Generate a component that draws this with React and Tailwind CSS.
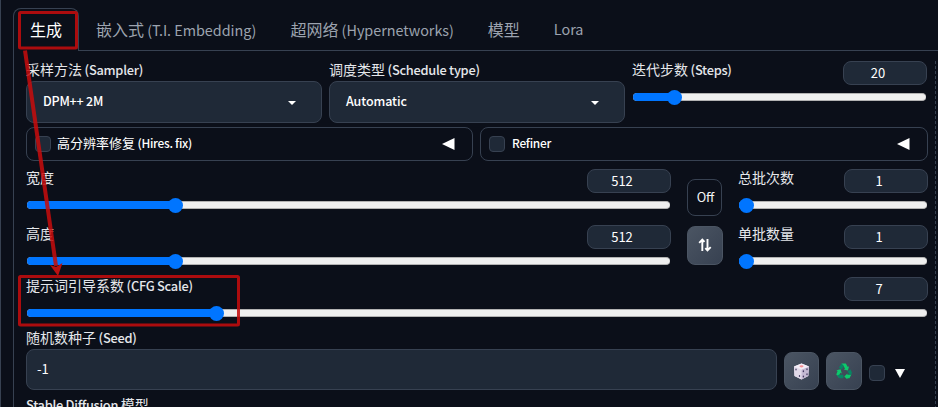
import React from "react";

// Latin glyphs are set a step smaller than the Chinese ones beside them.
function Label({ zh, en, className = "" }) {
  return (
    <div className={`-mt-[2px] flex h-[22px] items-baseline whitespace-pre text-[14px] leading-5 text-[#e5e7eb] ${className}`}>
      {zh && <span>{zh}</span>}
      {en && <span className="text-[12.8px] font-medium tracking-[-0.26px]">{(zh ? " " : "") + en}</span>}
    </div>
  );
}

function Tab({ zh, en }) {
  return (
    <div className="flex h-[42px] items-baseline whitespace-pre text-[16px] leading-[42px] text-[#9ca3af]">
      {zh && <span>{zh}</span>}
      {en && <span className="text-[14.4px] tracking-[-0.03px]">{(zh ? " " : "") + en}</span>}
    </div>
  );
}

function NumberBox({ value }) {
  return (
    <div className="flex h-6 w-[84px] shrink-0 items-center rounded-lg border border-[#374151] bg-[#1f2937] pr-[14px] text-[13px] text-white">
      <span className="w-full text-center">{value}</span>
    </div>
  );
}

function Slider({ fill }) {
  return (
    <div className="mx-px flex h-4 items-center">
      <div className="flex h-2 w-full items-center rounded-full border-y border-[#b2b2b2] bg-[#efefef]">
        <div className="h-2 shrink-0 rounded-l-full bg-[#0075ff]" style={{ width: fill }} />
        <div className="-ml-2 size-[15px] shrink-0 rounded-full bg-[#0075ff]" />
      </div>
    </div>
  );
}

function Range({ zh, en, value, fill, className = "" }) {
  return (
    <div className={className}>
      <div className="flex h-7 justify-between">
        <Label zh={zh} en={en} />
        <NumberBox value={value} />
      </div>
      <Slider fill={fill} />
    </div>
  );
}

function Select({ zh, en, value, valueClass }) {
  return (
    <div className="w-[296px]">
      <Label zh={zh} en={en} />
      <div className="flex h-[42px] items-center justify-between rounded-lg border border-[#374151] bg-[#1f2937] pr-[25px] pl-4">
        <span className={`-mt-[2px] text-[12.5px] font-medium text-white ${valueClass}`}>{value}</span>
        <svg width="8" height="4" viewBox="0 0 8 4" className="mt-[2px]">
          <path d="M0 0h8L4 4z" fill="#fff" />
        </svg>
      </div>
    </div>
  );
}

function Check() {
  return <div className="size-4 shrink-0 rounded-[4px] border border-[#374151] bg-[#1f2937]" />;
}

function Accordion({ zh, en, className }) {
  return (
    <div className={`flex h-[34px] items-center rounded-lg border border-[#374151] pl-2 ${className}`}>
      <Check />
      <div className="-mt-[2px] ml-[7px] flex items-baseline whitespace-pre text-[13px] leading-5 text-white">
        {zh && <span className="-ml-px">{zh}</span>}
        <span className="text-[11.9px] font-medium tracking-[-0.27px]">{(zh ? " " : "") + en}</span>
      </div>
      <svg width="13" height="12" viewBox="0 0 13 12" className="-mt-px ml-auto">
        <path d="M0 6L12.5 0v12z" fill="#fff" />
      </svg>
    </div>
  );
}

const toolButton =
  "flex items-center justify-center rounded-lg border border-[#4b5563] bg-linear-to-br from-[#4b5563] to-[#374151]";

function Dice() {
  return (
    <svg width="17" height="17" viewBox="0 0 17 17">
      <path d="M8.5.5L16 3.5 15.3 13 8.5 16.5 1.5 13 1 3.5z" fill="#e9e0f1" />
      <path d="M1 3.5L8.5 6.5v10L1.5 13z" fill="#e2dae9" />
      <path d="M16 3.5L8.5 6.5v10l6.8-3.5z" fill="#c4b9d2" />
      <path d="M1 3.5L8.5.5 16 3.5 8.5 6.5z" fill="#f3edf7" />
      <ellipse cx="8.5" cy="3.3" rx="2" ry="1.1" fill="#f79094" />
      <g fill="#453b62">
        <ellipse cx="3" cy="6.5" rx=".7" ry="1" />
        <ellipse cx="6.5" cy="13" rx=".7" ry="1" />
        <ellipse cx="14" cy="6.2" rx=".7" ry="1" />
        <ellipse cx="10.4" cy="8.2" rx=".7" ry="1" />
        <ellipse cx="14" cy="11.3" rx=".7" ry="1" />
        <ellipse cx="10.4" cy="13.4" rx=".7" ry="1" />
      </g>
    </svg>
  );
}

function Recycle() {
  return (
    <svg width="16" height="16" viewBox="0 0 16 16">
      <path d="M5.4.5h4.4l2 3.5 1.3-.7-1.2 4.2-4.2-1.1 1.3-.7L7.6 3z" fill="#0cca6b" />
      <path d="M5.4.5L7.8 3 5.9 6.5 2.9 4.7z" fill="#078563" />
      <path d="M.4 7.3l4.2-1 1.2 4.1-1.3-.7-1.6 2.8.5 2.7L.3 11.6l1.3-3.5z" fill="#0cca6b" />
      <path d="M2.9 11.7h4.5v3.6H3.5L1 12.2z" fill="#078563" />
      <path d="M15.4 11.4l-2 3.9h-2v1.2L8.3 13.4l3.1-3v1.3z" fill="#0cca6b" />
      <path d="M11.5 8.2l3-1.8 1.4 3.2-.7 2.1h-1.7z" fill="#078563" />
    </svg>
  );
}

// Red frames round the tab and the CFG slider, joined by an arrow.
function Annotations() {
  return (
    <svg width="938" height="407" className="pointer-events-none absolute top-0 -left-px" fill="none">
      <g stroke="#c40d0d" strokeOpacity=".87" strokeWidth="3">
        <rect x="19.5" y="12.5" width="57" height="35.5" rx="1" />
        <rect x="19.5" y="276.5" width="219" height="48.5" rx="1" />
        <path d="M25 50.5L56 266" strokeWidth="4" />
      </g>
      <path d="M50 265l6 2 6.5-4L58 276z" fill="#b81111" />
    </svg>
  );
}

export default function App() {
  return (
    <div className="relative flex h-[407px] w-[938px] overflow-hidden border-l border-[#374151] bg-[#0b0f19] pl-3 font-['Noto_Sans_CJK_SC',sans-serif]">
      <div className="flex w-[925px] shrink-0 flex-col">
        <div className="mt-2 flex h-[43px]">
          <div className="w-[66px] rounded-t-lg border border-b-0 border-[#374151] text-center text-[16px] leading-[41px] text-white">
            生成
          </div>
          <div className="flex flex-1 gap-[34px] border-b border-[#374151] pl-[17px]">
            <Tab zh="嵌入式" en="(T.I. Embedding)" />
            <Tab zh="超网络" en="(Hypernetworks)" />
            <Tab zh="模型" />
            <Tab en="Lora" />
          </div>
        </div>

        <div className="flex flex-1 border-l border-[#374151]">
          <div className="w-[902px] shrink-0 pt-[10px] pl-3">
            <div className="flex w-[902px] gap-[7px]">
              <Select zh="采样方法" en="(Sampler)" value="DPM++ 2M" valueClass="tracking-[-0.2px]" />
              <Select zh="调度类型" en="(Schedule type)" value="Automatic" valueClass="tracking-[-0.1px]" />
              <Range zh="迭代步数" en="(Steps)" value="20" fill="42px" className="w-[295px]" />
            </div>

            <div className="mt-1 flex w-[902px] gap-[7px]">
              <Accordion zh="高分辨率修复" en="(Hires. fix)" className="w-[447px] pr-[17px]" />
              <Accordion en="Refiner" className="w-[448px] pr-[17px]" />
            </div>

            <div className="mt-2 flex w-[902px]">
              <div className="flex w-[645px] flex-col gap-3">
                <Range zh="宽度" value="512" fill="149px" />
                <Range zh="高度" value="512" fill="149px" />
              </div>
              <div className="ml-4 flex w-9 flex-col gap-[10px] pt-[10px]">
                <div className="flex h-[37px] w-[35px] items-center justify-center rounded-lg border border-[#374151] pb-px pl-[2px] text-[12.8px] text-[#f3f4f6]">
                  Off
                </div>
                <div className={`${toolButton} h-[39px] w-9`}>
                  <svg width="14" height="14" viewBox="0 0 14 14" className="-mt-px" fill="none" stroke="#fff" strokeWidth="1.9">
                    <path d="M4.3 13V2M1.2 4.8L4.3 1.6l2.2 2.3M9.5 1v11M7.3 10.1l2.2 2.3 3.2-3.2" />
                  </svg>
                </div>
              </div>
              <div className="ml-[15px] flex w-[190px] flex-col gap-3">
                <Range zh="总批次数" value="1" fill="8px" />
                <Range zh="单批数量" value="1" fill="8px" />
              </div>
            </div>

            <Range zh="提示词引导系数" en="(CFG Scale)" value="7" fill="190px" className="mt-2 w-[902px]" />

            <div className="mt-[8px] w-[902px]">
              <Label zh="随机数种子" en="(Seed)" />
              <div className="flex h-[41px] items-end">
                <div className="flex h-[41px] w-[751px] items-center rounded-lg border border-[#374151] bg-[#1f2937] pb-px pl-[10px] text-[13px] text-white">
                  -1
                </div>
                <div className={`${toolButton} ml-[7px] h-[38px] w-[35px]`}>
                  <Dice />
                </div>
                <div className={`${toolButton} ml-[7px] h-[38px] w-9`}>
                  <Recycle />
                </div>
                <div className="ml-[7px] flex h-[34px] items-center gap-[10px]">
                  <Check />
                  <svg width="10" height="9" viewBox="0 0 10 9">
                    <path d="M0 0h10L5 9z" fill="#fff" />
                  </svg>
                </div>
              </div>
              <div className="mt-1 flex h-5 items-baseline text-[14px] leading-5 whitespace-pre text-[#e5e7eb]">
                <span className="text-[12.8px] font-medium tracking-[-0.28px]">Stable Diffusion </span>
                <span>模型</span>
              </div>
            </div>
          </div>
          <div className="mt-[10px] ml-[19px] w-px shrink-0 border-l border-dashed border-[#374151]" />
        </div>
      </div>
      <Annotations />
    </div>
  );
}
